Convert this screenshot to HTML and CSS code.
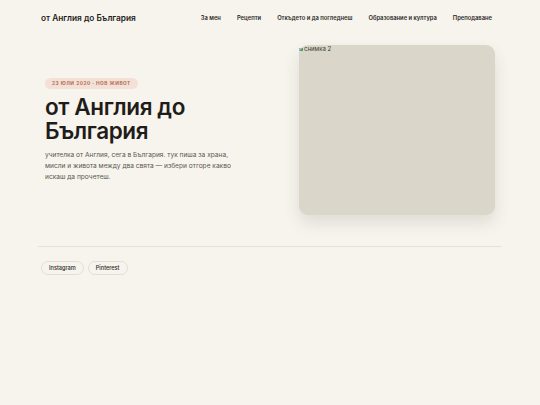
FILE: index.html
```html
<!DOCTYPE html>
<html lang="bg">
<head>
    <meta charset="UTF-8">
    <meta name="viewport" content="width=device-width, initial-scale=1.0">
    <title>от Англия до България</title>
    <link rel="stylesheet" href="styles.css">
</head>
<body>
    <div class="page">
        <header class="site-header">
            <a class="logo" href="#">от Англия до България</a>
            <nav class="nav">
                <a href="#">За мен</a>
                <a href="#">Рецепти</a>
                <a href="#">Откъдето и да погледнеш</a>
                <a href="#">Образование и култура</a>
                <a href="#">Преподаване</a>
            </nav>
        </header>

        <section class="hero">
            <div class="hero-text">
                <span class="tag">23 юли 2020 · нов живот</span>
                <h1>от Англия до България</h1>
                <p>учителка от Англия, сега в България. тук пиша за храна, мисли и живота между два свята — избери отгоре какво искаш да прочетеш.</p>
            </div>
            <div class="hero-photo">
                <span class="alt"><span class="broken"></span>снимка 2</span>
            </div>
        </section>

        <footer class="site-footer">
            <a class="pill" href="#">Instagram</a>
            <a class="pill" href="#">Pinterest</a>
        </footer>
    </div>
</body>
</html>
```

FILE: styles.css
```css
* {
    box-sizing: border-box;
}

body {
    margin: 0;
    background-color: #f7f4ee;
    color: #1f1d1a;
    font-family: Inter, "Noto Sans", sans-serif;
}

a {
    color: inherit;
    text-decoration: none;
}

.page {
    width: 464px;
    margin: 0 auto;
}

.site-header {
    display: flex;
    align-items: center;
    justify-content: space-between;
    height: 35px;
    padding: 0 10px 0 3px;
}

.logo {
    font-size: 8.3px;
    font-weight: 600;
}

.nav {
    display: flex;
    gap: 16px;
}

.nav a {
    font-size: 5.8px;
    font-weight: 600;
    color: #2a2825;
}

.hero {
    display: flex;
    align-items: center;
    justify-content: space-between;
    padding: 10px 7px 31px 7px;
    border-bottom: 1px solid #e6e1d7;
}

.hero-text {
    width: 190px;
}

.tag {
    display: block;
    width: fit-content;
    padding: 3px 7px;
    border-radius: 10px;
    background-color: #f3e1d7;
    color: #b56c52;
    font-size: 4.8px;
    line-height: 5px;
    font-weight: 700;
    letter-spacing: 0.5px;
    text-transform: uppercase;
}

h1 {
    margin: 6px 0 7px;
    font-size: 22.5px;
    font-weight: 600;
    line-height: 24px;
    letter-spacing: -0.4px;
}

p {
    margin: 0;
    font-size: 6.6px;
    line-height: 11px;
    color: #5a5650;
}

.hero-photo {
    width: 196px;
    height: 170px;
    border-radius: 9px;
    background-color: #dad6ca;
    box-shadow: 0 8px 16px rgba(60, 50, 30, 0.12);
}

.alt {
    display: flex;
    align-items: center;
    gap: 1px;
    font-size: 6px;
    color: #3c3a36;
    line-height: 8px;
}

.broken {
    width: 4px;
    height: 3px;
    background: linear-gradient(135deg, #8fb7e0 50%, #5a9e4b 50%);
}

.site-footer {
    display: flex;
    gap: 4px;
    padding: 14px 3px;
}

.pill {
    padding: 3px 7px;
    border: 1px solid #e4dfd4;
    border-radius: 10px;
    font-size: 5.6px;
    font-weight: 500;
    color: #2a2825;
}
```
